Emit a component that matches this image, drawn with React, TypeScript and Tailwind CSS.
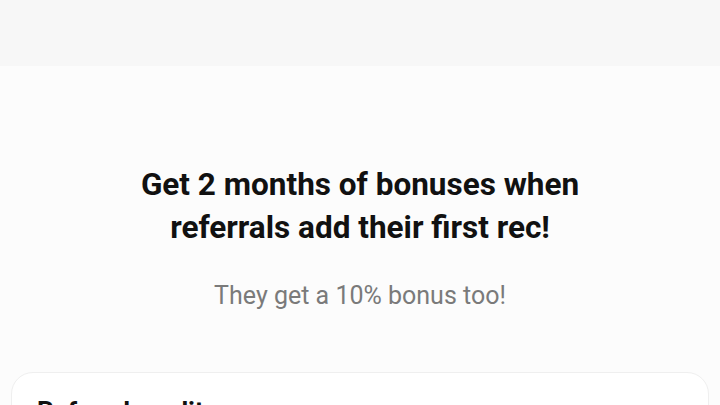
export default function App() {
  return (
    <div className="min-h-[405px] w-full bg-[#fcfcfc] font-['Roboto',sans-serif] overflow-hidden">
      {/* Top bar */}
      <div className="h-[66px] bg-[#f7f7f7]"></div>

      {/* Hero copy */}
      <div className="pt-[97px] px-6 text-center">
        <h1 className="text-[31.5px] leading-[43px] font-bold text-[#111111]">
          Get 2 months of bonuses when
          <br />
          referrals add their first rec!
        </h1>
        <p className="mt-[32px] text-[25px] leading-[30px] text-[#7a7a7a]">
          They get a 10% bonus too!
        </p>
      </div>

      {/* Card */}
      <div className="mt-[61px] mx-[11px] rounded-[22px] border border-[#efefef] bg-white px-[25px] pt-[22px] pb-6">
        <h2 className="text-[26px] leading-[32px] font-bold text-[#111111]">Referral credits</h2>
      </div>
    </div>
  );
}
